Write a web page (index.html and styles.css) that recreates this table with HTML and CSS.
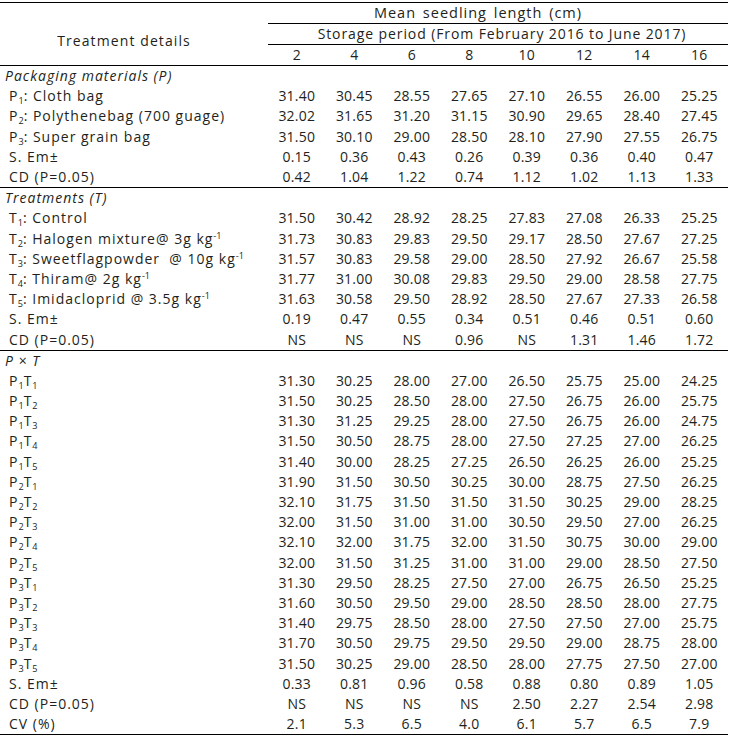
FILE: index.html
```html
<!DOCTYPE html>
<html>
<head>
<meta charset="utf-8">
<link rel="stylesheet" href="styles.css">
</head>
<body>
<table class="tbl">
<colgroup><col class="c0"><col class="cn"><col class="cn"><col class="cn"><col class="cn"><col class="cn"><col class="cn"><col class="cn"><col class="cn"></colgroup>
<thead>
<tr class="h1"><th rowspan="3" class="tdh">Treatment details</th><th colspan="8" class="grp g1">Mean seedling length (cm)</th></tr>
<tr><th colspan="8" class="grp g2">Storage period (From February 2016 to June 2017)</th></tr>
<tr class="hl"><th>2</th><th>4</th><th>6</th><th>8</th><th>10</th><th>12</th><th>14</th><th>16</th></tr>
</thead>
<tbody>
<tr><td class="sec" colspan="9">Packaging materials (P)</td></tr>
<tr><td class="lbl">P<sub>1</sub>: Cloth bag</td><td>31.40</td><td>30.45</td><td>28.55</td><td>27.65</td><td>27.10</td><td>26.55</td><td>26.00</td><td>25.25</td></tr>
<tr><td class="lbl">P<sub>2</sub>: Polythenebag (700 guage)</td><td>32.02</td><td>31.65</td><td>31.20</td><td>31.15</td><td>30.90</td><td>29.65</td><td>28.40</td><td>27.45</td></tr>
<tr><td class="lbl">P<sub>3</sub>: Super grain bag</td><td>31.50</td><td>30.10</td><td>29.00</td><td>28.50</td><td>28.10</td><td>27.90</td><td>27.55</td><td>26.75</td></tr>
<tr><td class="lbl">S. Em±</td><td>0.15</td><td>0.36</td><td>0.43</td><td>0.26</td><td>0.39</td><td>0.36</td><td>0.40</td><td>0.47</td></tr>
<tr class="end"><td class="lbl">CD (P=0.05)</td><td>0.42</td><td>1.04</td><td>1.22</td><td>0.74</td><td>1.12</td><td>1.02</td><td>1.13</td><td>1.33</td></tr>
<tr><td class="sec" colspan="9">Treatments (T)</td></tr>
<tr><td class="lbl">T<sub>1</sub>: Control</td><td>31.50</td><td>30.42</td><td>28.92</td><td>28.25</td><td>27.83</td><td>27.08</td><td>26.33</td><td>25.25</td></tr>
<tr><td class="lbl">T<sub>2</sub>: Halogen mixture@ 3g kg<sup>-1</sup></td><td>31.73</td><td>30.83</td><td>29.83</td><td>29.50</td><td>29.17</td><td>28.50</td><td>27.67</td><td>27.25</td></tr>
<tr><td class="lbl">T<sub>3</sub>: Sweetflagpowder &nbsp;@ 10g kg<sup>-1</sup></td><td>31.57</td><td>30.83</td><td>29.58</td><td>29.00</td><td>28.50</td><td>27.92</td><td>26.67</td><td>25.58</td></tr>
<tr><td class="lbl">T<sub>4</sub>: Thiram@ 2g kg<sup>-1</sup></td><td>31.77</td><td>31.00</td><td>30.08</td><td>29.83</td><td>29.50</td><td>29.00</td><td>28.58</td><td>27.75</td></tr>
<tr><td class="lbl">T<sub>5</sub>: Imidacloprid @ 3.5g kg<sup>-1</sup></td><td>31.63</td><td>30.58</td><td>29.50</td><td>28.92</td><td>28.50</td><td>27.67</td><td>27.33</td><td>26.58</td></tr>
<tr><td class="lbl">S. Em±</td><td>0.19</td><td>0.47</td><td>0.55</td><td>0.34</td><td>0.51</td><td>0.46</td><td>0.51</td><td>0.60</td></tr>
<tr class="end"><td class="lbl">CD (P=0.05)</td><td>NS</td><td>NS</td><td>NS</td><td>0.96</td><td>NS</td><td>1.31</td><td>1.46</td><td>1.72</td></tr>
<tr><td class="sec" colspan="9">P × T</td></tr>
<tr><td class="lbl">P<sub>1</sub>T<sub>1</sub></td><td>31.30</td><td>30.25</td><td>28.00</td><td>27.00</td><td>26.50</td><td>25.75</td><td>25.00</td><td>24.25</td></tr>
<tr><td class="lbl">P<sub>1</sub>T<sub>2</sub></td><td>31.50</td><td>30.25</td><td>28.50</td><td>28.00</td><td>27.50</td><td>26.75</td><td>26.00</td><td>25.75</td></tr>
<tr><td class="lbl">P<sub>1</sub>T<sub>3</sub></td><td>31.30</td><td>31.25</td><td>29.25</td><td>28.00</td><td>27.50</td><td>26.75</td><td>26.00</td><td>24.75</td></tr>
<tr><td class="lbl">P<sub>1</sub>T<sub>4</sub></td><td>31.50</td><td>30.50</td><td>28.75</td><td>28.00</td><td>27.50</td><td>27.25</td><td>27.00</td><td>26.25</td></tr>
<tr><td class="lbl">P<sub>1</sub>T<sub>5</sub></td><td>31.40</td><td>30.00</td><td>28.25</td><td>27.25</td><td>26.50</td><td>26.25</td><td>26.00</td><td>25.25</td></tr>
<tr><td class="lbl">P<sub>2</sub>T<sub>1</sub></td><td>31.90</td><td>31.50</td><td>30.50</td><td>30.25</td><td>30.00</td><td>28.75</td><td>27.50</td><td>26.25</td></tr>
<tr><td class="lbl">P<sub>2</sub>T<sub>2</sub></td><td>32.10</td><td>31.75</td><td>31.50</td><td>31.50</td><td>31.50</td><td>30.25</td><td>29.00</td><td>28.25</td></tr>
<tr><td class="lbl">P<sub>2</sub>T<sub>3</sub></td><td>32.00</td><td>31.50</td><td>31.00</td><td>31.00</td><td>30.50</td><td>29.50</td><td>27.00</td><td>26.25</td></tr>
<tr><td class="lbl">P<sub>2</sub>T<sub>4</sub></td><td>32.10</td><td>32.00</td><td>31.75</td><td>32.00</td><td>31.50</td><td>30.75</td><td>30.00</td><td>29.00</td></tr>
<tr><td class="lbl">P<sub>2</sub>T<sub>5</sub></td><td>32.00</td><td>31.50</td><td>31.25</td><td>31.00</td><td>31.00</td><td>29.00</td><td>28.50</td><td>27.50</td></tr>
<tr><td class="lbl">P<sub>3</sub>T<sub>1</sub></td><td>31.30</td><td>29.50</td><td>28.25</td><td>27.50</td><td>27.00</td><td>26.75</td><td>26.50</td><td>25.25</td></tr>
<tr><td class="lbl">P<sub>3</sub>T<sub>2</sub></td><td>31.60</td><td>30.50</td><td>29.50</td><td>29.00</td><td>28.50</td><td>28.50</td><td>28.00</td><td>27.75</td></tr>
<tr><td class="lbl">P<sub>3</sub>T<sub>3</sub></td><td>31.40</td><td>29.75</td><td>28.50</td><td>28.00</td><td>27.50</td><td>27.50</td><td>27.00</td><td>25.75</td></tr>
<tr><td class="lbl">P<sub>3</sub>T<sub>4</sub></td><td>31.70</td><td>30.50</td><td>29.75</td><td>29.50</td><td>29.50</td><td>29.00</td><td>28.75</td><td>28.00</td></tr>
<tr><td class="lbl">P<sub>3</sub>T<sub>5</sub></td><td>31.50</td><td>30.25</td><td>29.00</td><td>28.50</td><td>28.00</td><td>27.75</td><td>27.50</td><td>27.00</td></tr>
<tr><td class="lbl">S. Em±</td><td>0.33</td><td>0.81</td><td>0.96</td><td>0.58</td><td>0.88</td><td>0.80</td><td>0.89</td><td>1.05</td></tr>
<tr><td class="lbl">CD (P=0.05)</td><td>NS</td><td>NS</td><td>NS</td><td>NS</td><td>2.50</td><td>2.27</td><td>2.54</td><td>2.98</td></tr>
<tr class="end"><td class="lbl">CV (%)</td><td>2.1</td><td>5.3</td><td>6.5</td><td>4.0</td><td>6.1</td><td>5.7</td><td>6.5</td><td>7.9</td></tr>
</tbody>
</table>
</body>
</html>
```
FILE: styles.css
```css
html, body {
  margin: 0;
  padding: 0;
  background: #ffffff;
}
body {
  padding-top: 2px;
  font-family: "Open Sans", "DejaVu Sans", sans-serif;
  font-size: 14px;
  color: #231f20;
}
.tbl {
  border-collapse: collapse;
  width: 728px;
  table-layout: fixed;
}
.c0 { width: 268px; }
.cn { width: 57.5px; }
.tbl th {
  font-weight: normal;
  padding: 0;
  height: 20px;
  line-height: 18px;
  text-align: center;
  letter-spacing: 1.1px;
  vertical-align: middle;
}
.tbl thead tr.h1 th {
  border-top: 1px solid #000;
}
.tbl th.grp {
  border-bottom: 1px solid #000;
}
.tbl th.g1 {
  font-size: 14.5px;
  letter-spacing: 1px;
  word-spacing: 2px;
  padding-right: 40px;
}
.tbl th.g2 {
  letter-spacing: 0.9px;
  padding-left: 8px;
}
.tbl tr.hl th {
  border-bottom: 1px solid #000;
  letter-spacing: 0.2px;
}
.tbl th.tdh {
  border-bottom: 1px solid #000;
  padding: 14px 20px 0 0;
  letter-spacing: 1.1px;
}
.tbl td {
  padding: 0;
  height: 20.2px;
  line-height: 18px;
  text-align: center;
  white-space: nowrap;
  letter-spacing: 0.2px;
}
.tbl td.sec {
  text-align: left;
  font-style: italic;
  padding-left: 5px;
  letter-spacing: 1px;
}
.tbl td.lbl {
  text-align: left;
  padding-left: 9px;
  letter-spacing: 1px;
}
.tbl tr.end td {
  border-bottom: 1px solid #000;
}
sub {
  font-size: 65%;
  vertical-align: -3px;
  line-height: 0;
  letter-spacing: 0;
}
sup {
  font-size: 65%;
  vertical-align: 5px;
  line-height: 0;
  letter-spacing: 0;
}
```
